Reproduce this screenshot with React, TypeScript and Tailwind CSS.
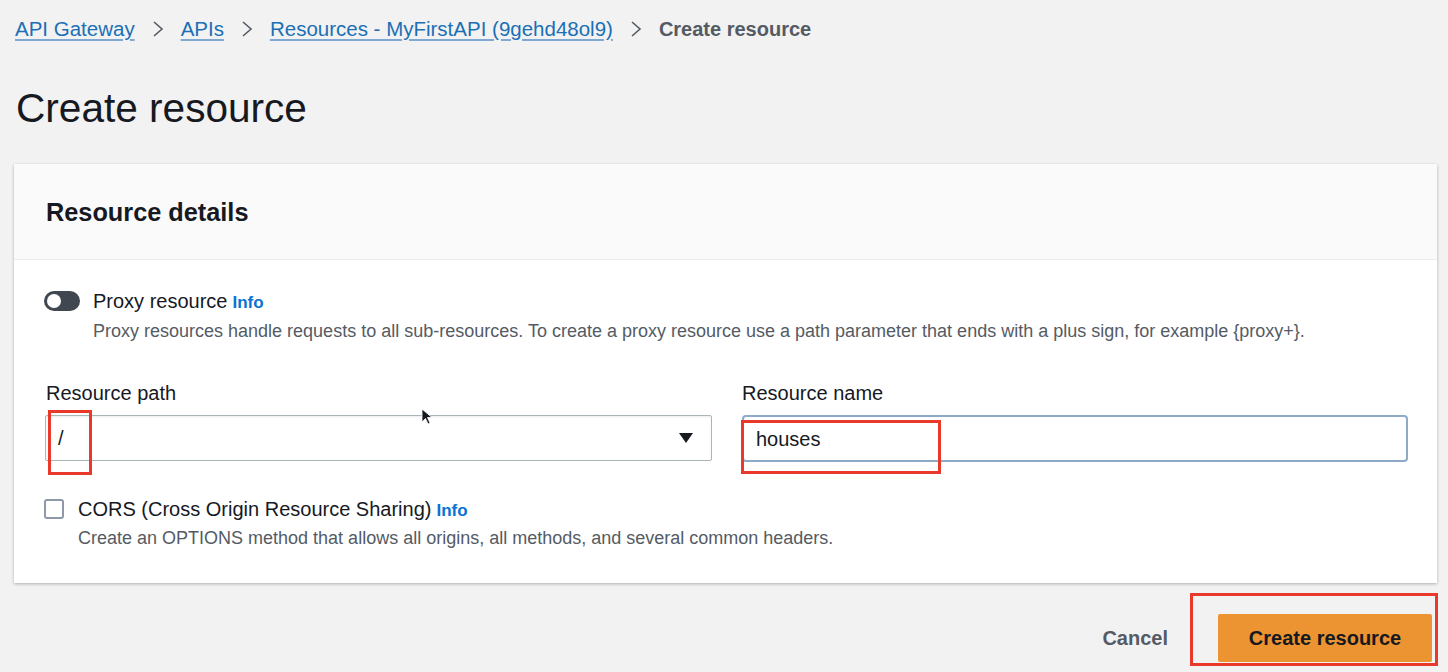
import { ReactNode } from "react";

/** Breadcrumb trail entries */
const crumbs: { label: string; current?: boolean }[] = [
    { label: "API Gateway" },
    { label: "APIs" },
    { label: "Resources - MyFirstAPI (9gehd48ol9)" },
    { label: "Create resource", current: true },
];

const Chevron = () => (
    <svg width="12" height="20" viewBox="0 0 12 20" className="shrink-0">
        <path d="M2 3 L10 10 L2 17" fill="none" stroke="#545b64" strokeWidth="1.6" />
    </svg>
);

const InfoLink = () => (
    <span className="ml-[5px] text-[17px] font-bold text-[#0972d3]">Info</span>
);

/** Red annotation box drawn over the screenshot */
const Mark = ({ className }: { className: string }) => (
    <div className={`absolute border-[3px] border-[#e8392b] pointer-events-none ${className}`} />
);

const Field = ({ label, children }: { label: string; children: ReactNode }) => (
    <div className="flex flex-col">
        <label className="text-[20px] leading-[24px] text-[#16191f]">{label}</label>
        <div className="mt-[10px]">{children}</div>
    </div>
);

const App = () => {
    return (
        <div className="relative w-full h-[672px] overflow-hidden bg-[#f2f2f2] font-['Liberation_Sans',Arial,sans-serif] text-[#16191f]">
            {/* Breadcrumbs */}
            <nav className="flex items-center gap-[17px] pl-[15px] pt-[16px] text-[20.5px] leading-[26px]">
                {crumbs.map((crumb, i) => (
                    <div key={i} className="flex items-center gap-[17px]">
                        {i > 0 && <Chevron />}
                        {crumb.current ? (
                            <span className="font-bold text-[#545b64] text-[20px]">{crumb.label}</span>
                        ) : (
                            <a className="text-[#1b6fb5] underline decoration-[#7fa9d3] underline-offset-[3px]">{crumb.label}</a>
                        )}
                    </div>
                ))}
            </nav>

            <h1 className="mt-[42px] pl-[16px] text-[40.6px] leading-[48px] text-[#16191f]">Create resource</h1>

            {/* Card */}
            <div className="mt-[32px] ml-[14px] w-[1423px] bg-white shadow-[0_1px_3px_rgba(0,0,0,0.28)]">
                <div className="h-[96px] flex items-center pl-[32px] bg-[#fafafa] border-b border-[#eaeded]">
                    <h2 className="text-[25.3px] font-bold leading-[30px]">Resource details</h2>
                </div>

                <div className="pl-[32px] pr-[29px] pt-[29px] pb-[35px]">
                    {/* Proxy toggle */}
                    <div className="flex items-start">
                        <div className="mt-[2px] ml-[-2px] w-[36px] h-[20px] rounded-full bg-[#414750] flex items-center pl-[3px]">
                            <div className="w-[14px] h-[14px] rounded-full bg-white" />
                        </div>
                        <div className="ml-[13px]">
                            <div className="text-[20px] leading-[24px] flex items-baseline">
                                Proxy resource
                                <InfoLink />
                            </div>
                            <p className="mt-[6px] text-[18px] leading-[20px] text-[#545b64]">
                                Proxy resources handle requests to all sub-resources. To create a proxy resource use a path parameter that ends with a plus sign, for example {"{proxy+}"}.
                            </p>
                        </div>
                    </div>

                    {/* Path + name */}
                    <div className="mt-[40px] grid grid-cols-2 gap-[30px]">
                        <Field label="Resource path">
                            <div className="h-[46px] ml-[-1px] flex items-center justify-between px-[12px] border border-[#aab7b8] rounded-[2px] bg-white shadow-[inset_0_1px_2px_rgba(0,0,0,0.08)]">
                                <span className="text-[20px]">/</span>
                                <svg width="14" height="10" viewBox="0 0 14 10" className="mr-[6px]">
                                    <path d="M0 0 H14 L7 10 Z" fill="#16191f" />
                                </svg>
                            </div>
                        </Field>
                        <Field label="Resource name">
                            <div className="h-[47px] flex items-center px-[12px] border-2 border-[#8eaac8] rounded-[4px] bg-white">
                                <span className="text-[20px]">houses</span>
                            </div>
                        </Field>
                    </div>

                    {/* CORS */}
                    <div className="mt-[35px] flex items-start">
                        <div className="mt-[2px] ml-[-2px] w-[20px] h-[20px] border-2 border-[#8d99a8] rounded-[3px] bg-white shrink-0" />
                        <div className="ml-[14px]">
                            <div className="text-[20px] leading-[24px] flex items-baseline">
                                CORS (Cross Origin Resource Sharing)
                                <InfoLink />
                            </div>
                            <p className="mt-[5px] text-[18px] leading-[20px] text-[#545b64]">
                                Create an OPTIONS method that allows all origins, all methods, and several common headers.
                            </p>
                        </div>
                    </div>
                </div>
            </div>

            {/* Actions */}
            <div className="mt-[31px] pr-[16px] flex items-center justify-end gap-[50px]">
                <button className="text-[20px] font-bold text-[#545b64]">Cancel</button>
                <button className="w-[214px] h-[48px] bg-[#ec9332] text-[20px] font-bold text-[#16191f] rounded-[2px]">
                    Create resource
                </button>
            </div>

            {/* Mouse pointer */}
            <svg width="12" height="18" viewBox="0 0 12 18" className="absolute left-[421px] top-[408px]">
                <path d="M1 1 L1 14 L4.5 10.5 L7 16 L9 15 L6.5 9.5 L11 9.5 Z" fill="#16191f" stroke="#ffffff" strokeWidth="0.8" />
            </svg>

            {/* Annotations */}
            <Mark className="left-[48px] top-[410px] w-[44px] h-[65px]" />
            <Mark className="left-[741px] top-[420px] w-[200px] h-[54px]" />
            <Mark className="left-[1190px] top-[593px] w-[248px] h-[73px]" />
        </div>
    );
};

export default App;
